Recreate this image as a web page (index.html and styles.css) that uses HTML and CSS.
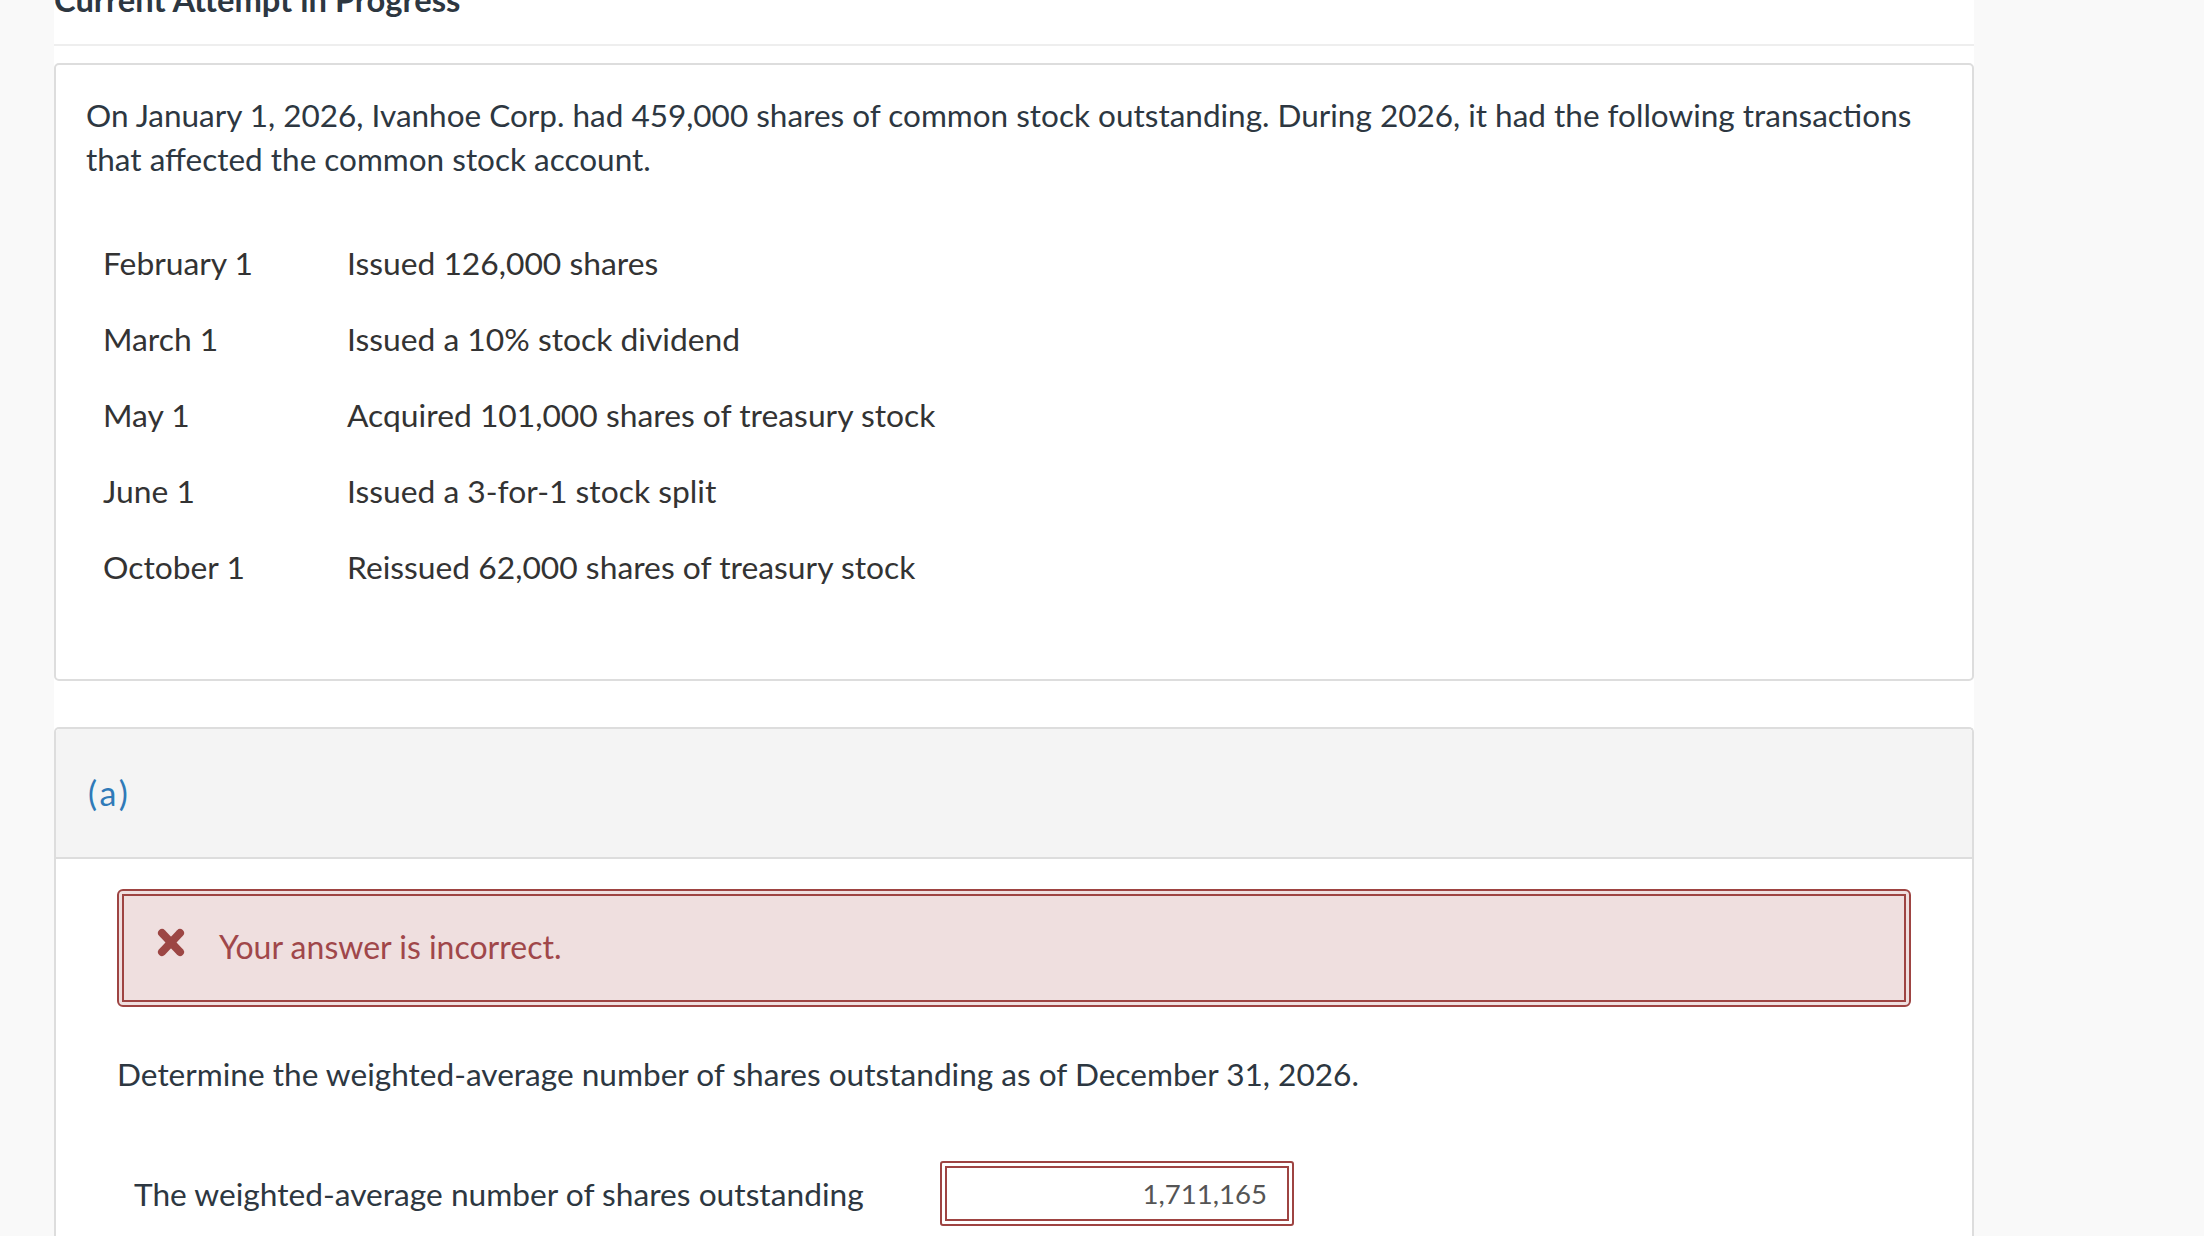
FILE: index.html
```html
<!DOCTYPE html>
<html lang="en">
<head>
<meta charset="utf-8">
<title>Current Attempt in Progress</title>
<link rel="stylesheet" href="styles.css">
</head>
<body>
<div class="page">
  <h2 class="title">Current Attempt in Progress</h2>

  <section class="card question">
    <p class="intro">On January 1, 2026, Ivanhoe Corp. had 459,000 shares of common stock outstanding. During 2026, it had the following transactions that affected the common stock account.</p>
    <table class="events">
      <tbody>
        <tr><td class="date">February 1</td><td>Issued 126,000 shares</td></tr>
        <tr><td class="date">March 1</td><td>Issued a 10% stock dividend</td></tr>
        <tr><td class="date">May 1</td><td>Acquired 101,000 shares of treasury stock</td></tr>
        <tr><td class="date">June 1</td><td>Issued a 3-for-1 stock split</td></tr>
        <tr><td class="date">October 1</td><td>Reissued 62,000 shares of treasury stock</td></tr>
      </tbody>
    </table>
  </section>

  <section class="card part">
    <div class="part-head"><span class="part-label">(a)</span></div>
    <div class="part-body">
      <div class="alert">
        <div class="alert-inner">
          <svg class="x-icon" viewBox="0 0 28 29" width="28" height="29" aria-hidden="true">
            <line x1="5" y1="5" x2="23" y2="24" stroke="#9c4644" stroke-width="8" stroke-linecap="round"/>
            <line x1="23" y1="5" x2="5" y2="24" stroke="#9c4644" stroke-width="8" stroke-linecap="round"/>
          </svg>
          <span class="alert-text">Your answer is incorrect.</span>
        </div>
      </div>
      <p class="prompt">Determine the weighted-average number of shares outstanding as of December 31, 2026.</p>
      <div class="answer-row">
        <div class="answer-label">The weighted-average number of shares outstanding</div>
        <div class="answer-box">
          <div class="answer-inner">1,711,165</div>
        </div>
      </div>
    </div>
  </section>
</div>
</body>
</html>
```

FILE: styles.css
```css
html, body {
  margin: 0;
  padding: 0;
}

body {
  background: #f9f9f9;
  font-family: Lato, "Noto Sans", "Liberation Sans", sans-serif;
  color: #2d3741;
  overflow: hidden;
}

.page {
  margin-left: 54px;
  width: 1920px;
  min-height: 1300px;
  background: #ffffff;
}

.title {
  margin: -15px 0 0;
  padding: 0 0 29px;
  font-size: 32.7px;
  line-height: 30px;
  font-weight: 700;
  color: #2d3741;
  border-bottom: 2px solid #eeeeee;
}

.card {
  border: 2px solid #dddddd;
  border-radius: 5px;
  background: #ffffff;
}

.question {
  margin-top: 17px;
  padding: 28px 30px 74px;
}

.intro {
  margin: 0;
  font-size: 31.5px;
  line-height: 44px;
  color: #2d3741;
}

.events {
  margin-top: 44px;
  border-collapse: collapse;
  border-spacing: 0;
  font-size: 31.8px;
  line-height: 44px;
  color: #333333;
}

.events td {
  padding: 16px 17px;
  vertical-align: top;
}

.events td.date {
  width: 210px;
}

.part {
  margin-top: 46px;
  border-bottom: none;
  border-radius: 5px 5px 0 0;
}

.part-head {
  height: 128px;
  display: flex;
  align-items: center;
  padding-left: 32px;
  background: #f4f4f4;
  border-bottom: 2px solid #dddddd;
  border-radius: 4px 4px 0 0;
}

.part-label {
  font-size: 34px;
  line-height: 44px;
  letter-spacing: 3px;
  color: #2f7ab8;
}

.part-body {
  padding: 30px 61px 80px;
}

.alert {
  border: 2px solid #9e4442;
  border-radius: 6px;
  padding: 3px;
  background: #efdfdf;
}

.alert-inner {
  border: 2px solid #9e4442;
  display: flex;
  align-items: center;
  gap: 34px;
  padding: 29px 33px 31px;
}

.x-icon {
  flex: none;
  display: block;
  margin-bottom: 10px;
}

.alert-text {
  font-size: 32px;
  line-height: 44px;
  color: #a0474a;
}

.prompt {
  margin: 45px 0 0;
  font-size: 31.6px;
  line-height: 44px;
  color: #2d3741;
}

.answer-row {
  margin-top: 65px;
  display: flex;
  align-items: center;
}

.answer-label {
  width: 806px;
  padding-left: 17px;
  font-size: 31.7px;
  line-height: 44px;
  color: #2d3741;
}

.answer-box {
  width: 344px;
  border: 2px solid #9e4442;
  border-radius: 3px;
  padding: 3px;
}

.answer-inner {
  border: 2px solid #9e4442;
  background: #ffffff;
  height: 51px;
  padding-right: 20px;
  text-align: right;
  font-size: 27.6px;
  line-height: 51px;
  color: #555555;
}
```
